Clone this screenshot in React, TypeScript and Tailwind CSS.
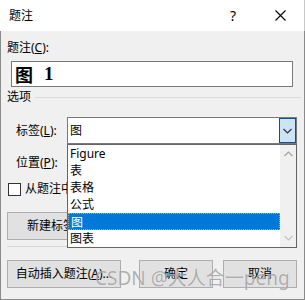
const ui = '"Segoe UI", "Noto Sans", "Noto Sans CJK SC", sans-serif';

function Chevron({ up, className }: { up?: boolean; className?: string }) {
  return (
    <svg width="9" height="6" viewBox="0 0 9 6" className={className}>
      <path
        d={up ? 'M0.5 5 L4.5 1 L8.5 5' : 'M0.5 1 L4.5 5 L8.5 1'}
        fill="none"
        stroke="currentColor"
        strokeWidth="1.2"
      />
    </svg>
  );
}

function Button({ children, className }: { children: React.ReactNode; className?: string }) {
  return (
    <div
      className={
        'h-[28px] flex items-center justify-center border border-[#adadad] bg-[#e1e1e1] text-[12px] text-black ' +
        (className ?? '')
      }
    >
      {children}
    </div>
  );
}

const items = ['Figure', '表', '表格', '公式', '图', '图表'];

export default function App() {
  return (
    <div
      className="relative w-[305px] h-[300px] overflow-hidden flex flex-col bg-white text-black"
      style={{ fontFamily: ui }}
    >
      {/* Title bar */}
      <div className="h-[31px] shrink-0 flex items-center bg-white border-r border-[#c8c8c8]">
        <span className="ml-[9px] text-[12px] leading-[16px]">题注</span>
        <span className="ml-auto w-[14px] text-center text-[14px] leading-[16px] mr-[35px]">?</span>
        <svg width="11" height="11" viewBox="0 0 11 11" className="mr-[18px]">
          <path d="M0.5 0.5 L10.5 10.5 M10.5 0.5 L0.5 10.5" stroke="#000" strokeWidth="1.1" />
        </svg>
      </div>

      {/* Body */}
      <div className="flex-1 flex flex-col bg-[#f0f0f0] border-l border-r border-b border-[#8a8a8a] text-[12px]">
        <div className="mt-[9px] ml-[6px] h-[16px] leading-[16px]">
          题注(<u>C</u>):
        </div>
        <div className="mt-[5px] ml-[10px] w-[282px] h-[26px] bg-white border border-[#7a7a7a] flex items-center pl-[3px]">
          <span className="text-[18px] font-bold leading-[20px]" style={{ fontFamily: '"Noto Sans CJK SC", serif' }}>
            图
          </span>
          <span className="ml-[11px] text-[19px] font-bold leading-[20px]" style={{ fontFamily: '"Liberation Serif", serif' }}>
            1
          </span>
        </div>

        <div className="mt-[2px] h-[16px] flex items-center">
          <span className="ml-[6px] leading-[16px]">选项</span>
          <div className="flex-1 h-px bg-[#dcdcdc] ml-[4px] mr-[3px]" />
        </div>

        <div className="mt-[12px] h-[27px] flex items-center">
          <span className="ml-[15px] w-[51px] leading-[16px]">
            标签(<u>L</u>):
          </span>
          <div className="w-[230px] h-[27px] bg-white border border-[#7a7a7a] flex items-center">
            <span className="ml-[2px] leading-[16px]">图</span>
            <div className="ml-auto h-[25px] w-[17px] bg-[#cce4f7] border border-[#005499] flex items-center justify-center text-[#333]">
              <Chevron />
            </div>
          </div>
        </div>

        <div className="mt-[11px] h-[16px] ml-[15px] leading-[16px]">
          位置(<u>P</u>):
        </div>

        <div className="mt-[10px] h-[16px] flex items-center">
          <div className="ml-[7px] w-[13px] h-[13px] bg-white border border-[#333]" />
          <span className="ml-[4px] leading-[16px]">从题注中排除标签</span>
        </div>

        <div className="mt-[15px] ml-[6px]">
          <Button className="w-[110px] !justify-start pl-[19px]">新建标签(N)...</Button>
        </div>

        <div className="mt-[6px] mx-[6px] h-px bg-[#d5d5d5]" />

        <div className="mt-[13px] flex ml-[6px]">
          <Button className="w-[114px]">
            自动插入题注(<u>A</u>)...
          </Button>
          <Button className="ml-[18px] w-[74px]">确定</Button>
          <Button className="ml-[10px] w-[74px]">取消</Button>
        </div>
      </div>

      {/* Open dropdown list */}
      <div className="absolute left-[67px] top-[144px] w-[230px] h-[104px] bg-white border border-[#646464] flex text-[12px]">
        <div className="flex-1 pt-[0px]">
          {items.map((it) => (
            <div
              key={it}
              className={
                'h-[17px] leading-[17px] pl-[2px] ' +
                (it === '图' ? 'bg-[#0078d7] text-white border border-dotted border-[#e8a050] pl-[1px] leading-[15px]' : '')
              }
            >
              {it}
            </div>
          ))}
        </div>
        <div className="w-[16px] bg-[#f0f0f0] flex flex-col items-center justify-between py-[6px]">
          <Chevron up className="text-[#a3a3a3]" />
          <Chevron className="text-[#c5c5c5]" />
        </div>
      </div>

      {/* Watermark */}
      <div
        className="absolute left-[95px] top-[266px] text-[19px] leading-[24px] text-[rgba(110,110,110,0.55)] whitespace-nowrap"
        style={{ fontFamily: '"Noto Sans", "Noto Sans CJK SC", sans-serif', textShadow: '0 0 1px rgba(255,255,255,0.8)' }}
      >
        CSDN @大人合一peng
      </div>
    </div>
  );
}
